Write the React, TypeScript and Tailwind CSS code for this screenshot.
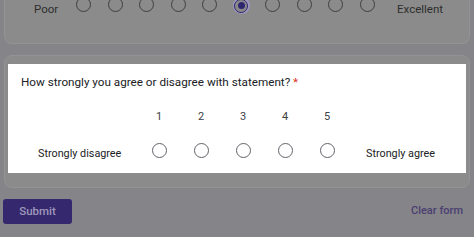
import React from "react";

const font = { fontFamily: 'Roboto, "Liberation Sans", Arial, sans-serif' };

function DimRadio({ selected }: { selected?: boolean }) {
  if (selected) {
    return (
      <div className="w-[17px] h-[17px] rounded-full bg-[#9d97c0] flex items-center justify-center">
        <div className="w-[14px] h-[14px] rounded-full border-[1.5px] border-[#2f2670] bg-[#8a8a8a] flex items-center justify-center">
          <div className="w-[7px] h-[7px] rounded-full bg-[#2f2670]" />
        </div>
      </div>
    );
  }
  return <div className="w-[15px] h-[15px] rounded-full border-[1.5px] border-[#3f3f3f]" />;
}

export default function App() {
  const top = [0, 1, 2, 3, 4, 5, 6, 7, 8, 9];
  const nums = [1, 2, 3, 4, 5];
  return (
    <div className="w-[474px] h-[237px] overflow-hidden bg-[#858489] flex flex-col" style={font}>
      {/* top card (dimmed) */}
      <div className="mx-[4px] h-[44px] rounded-b-[8px] bg-[#8b8b8b] border-x border-b border-[#939393] flex items-start">
        <div className="w-[63px] pl-[29px] mt-[1px] text-[11.5px] leading-[16px] text-[#2e2e2e]">Poor</div>
        {top.map((i) => (
          <div key={i} className="w-[31.5px] flex justify-center mt-[-3px]">
            <DimRadio selected={i === 5} />
          </div>
        ))}
        <div className="pl-[14px] mt-[1px] text-[11.5px] leading-[16px] text-[#2e2e2e]">Excellent</div>
      </div>

      {/* second card with highlighted white region */}
      <div className="mx-[4px] mt-[11px] h-[133px] rounded-[8px] bg-[#8b8b8b] border border-[#939393] pt-[8px] px-[3px]">
        <div className="bg-white h-[109px] pt-[9px] pl-[13px]">
          <div className="text-[11.7px] leading-[18px] text-[#202124]">
            How strongly you agree or disagree with statement? <span className="text-[#d93025]">*</span>
          </div>
          <div className="flex items-end mt-[18px] -ml-[13px]">
            <div className="w-[130px] pl-[30px] text-[10.8px] leading-[16px] text-[#202124] mb-[-4px]">
              Strongly disagree
            </div>
            {nums.map((n) => (
              <div key={n} className="w-[42px] flex flex-col items-center">
                <div className="text-[11px] leading-[16px] text-[#3c4043]">{n}</div>
                <div className="mt-[18px] w-[15px] h-[15px] rounded-full border-[1.5px] border-[#5f6368]" />
              </div>
            ))}
            <div className="pl-[18px] text-[10.8px] leading-[16px] text-[#202124] mb-[-4px]">Strongly agree</div>
          </div>
        </div>
      </div>

      {/* footer */}
      <div className="flex items-center justify-between mt-[11px] pl-[3px] pr-[11px]">
        <div className="w-[69px] h-[25px] rounded-[3px] bg-[#36286f] flex items-center justify-center text-[11.5px] font-medium text-[#9e98ba]">
          Submit
        </div>
        <div className="text-[11px] font-medium text-[#4a3f70]">Clear form</div>
      </div>
    </div>
  );
}
